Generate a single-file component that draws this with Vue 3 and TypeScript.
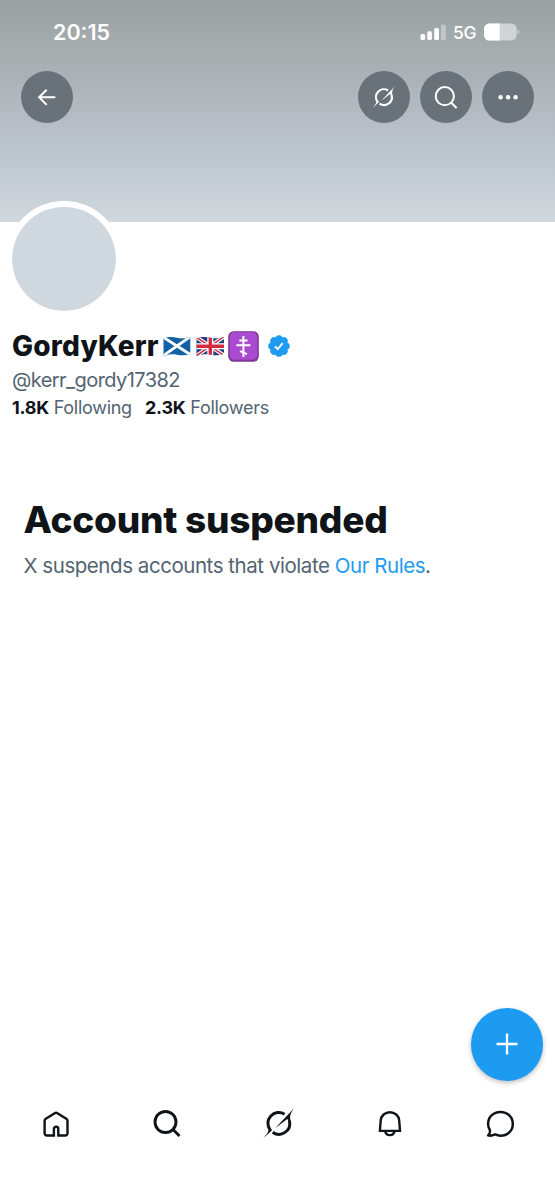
<script setup lang="ts">
const grokRing = 'M26 11.2A10.8 10.8 0 0 0 11.5 26.7M14.2 29.3A10.8 10.8 0 0 0 30.9 17.8'
const grokSlash =
  'M36 4.7L16.6 25.3L28.800 16Q30 17 29.500 18.500L32.300 18C30.900 13.500 31.500 10.500 36 4.700zM4.700 35.300L13.600 27.200L12.400 25.400L9.900 27.200C9.700 29.500 7.800 31.500 4.700 35.300z'
const badgeLobes: number[] = [0, 45, 90, 135, 180, 225, 270, 315]
</script>

<template>
  <div class="screen">
    <header class="banner">
      <div class="status">
        <span class="time">20:15</span>
        <div class="signals">
          <svg class="bars" width="26" height="17" viewBox="0 0 26 17" fill="#fff">
            <rect x="0.5" y="10" width="4.6" height="6" rx="1.6" />
            <rect x="7.3" y="7.3" width="4.6" height="8.7" rx="1.6" />
            <rect x="14.2" y="4" width="4.8" height="12" rx="1.6" />
            <rect x="21" y="0.5" width="4.8" height="15.5" rx="1.6" opacity="0.35" />
          </svg>
          <span class="network">5G</span>
          <svg class="battery" width="36" height="18" viewBox="0 0 36 18">
            <rect x="0" y="0.5" width="32.7" height="17" rx="5.4" fill="#fff" opacity="0.5" />
            <path d="M5.4.5H15.7v17H5.4A5.4 5.4 0 0 1 0 12.1V5.9A5.4 5.4 0 0 1 5.4.5z" fill="#fff" />
            <path d="M33.7 6.3c2 .9 2 4.5 0 5.4z" fill="#fff" opacity="0.5" />
          </svg>
        </div>
      </div>
      <div class="actions">
        <button class="round" aria-label="Back">
          <svg width="52" height="52" viewBox="0 0 52 52" fill="none" stroke="#fff" stroke-width="2">
            <path d="M34.3 26.3H18M25.7 18.7l-7.6 7.6 7.6 7.6" />
          </svg>
        </button>
        <div class="group">
          <button class="round" aria-label="Grok">
            <svg width="24" height="24" viewBox="3.9 3.7 33 33">
              <path :d="grokRing" fill="none" stroke="#fff" stroke-width="3" />
              <path :d="grokSlash" fill="#fff" />
            </svg>
          </button>
          <button class="round" aria-label="Search">
            <svg width="52" height="52" viewBox="0 0 52 52" fill="none" stroke="#fff" stroke-width="2">
              <circle cx="24.8" cy="25.2" r="9.1" />
              <path d="M31.3 31.7l5.3 5.3" />
            </svg>
          </button>
          <button class="round" aria-label="More">
            <svg width="52" height="52" viewBox="0 0 52 52" fill="#fff">
              <circle cx="18.6" cy="26.2" r="2.2" />
              <circle cx="26.1" cy="26.2" r="2.2" />
              <circle cx="33.6" cy="26.2" r="2.2" />
            </svg>
          </button>
        </div>
      </div>
    </header>

    <section class="profile">
      <div class="avatar"></div>
      <div class="name-row">
        <span class="name">GordyKerr</span>
        <svg class="scotland" width="28" height="21" viewBox="0 0 28 21">
          <defs>
            <clipPath id="scot"><path d="M.5 2.3C6.500.2 10 .8 14 1.7s8 .8 13.300-.7v16.7c-5 1.9-9.300 1.8-13.300 1S6 18 .5 20z" /></clipPath>
          </defs>
          <g clip-path="url(#scot)">
            <rect width="28" height="21" fill="#1261a8" />
            <path d="M0 1l28 18M0 20L28 0" stroke="#fff" stroke-width="2.8" />
          </g>
        </svg>
        <svg class="union" width="29" height="21" viewBox="0 0 29 21">
          <defs>
            <clipPath id="union"><path d="M.5 2.3C6.5.2 10.5.8 14.5 1.7s8 .8 13.500-.7v16.7c-5 1.9-9.5 1.8-13.500 1s-8-.7-14 1.300z" /></clipPath>
          </defs>
          <g clip-path="url(#union)">
            <rect width="29" height="21" fill="#253c7c" />
            <path d="M0 1l29 19M0 20L29 0" stroke="#fff" stroke-width="3.8" />
            <path d="M0 1l29 19M0 20L29 0" stroke="#d22b40" stroke-width="1.5" />
            <path d="M14.3 0v21M0 10.3h29" stroke="#fff" stroke-width="6" />
            <path d="M14.3 0v21M0 10.3h29" stroke="#d22b40" stroke-width="3.4" />
          </g>
        </svg>
        <svg class="cross" width="31" height="31" viewBox="0 0 31 31">
          <rect x="0.2" y="0.2" width="30.6" height="30.6" rx="5.5" fill="#7f3496" />
          <rect x="1.6" y="1.2" width="27.6" height="27.6" rx="4.7" fill="#a94bd0" />
          <path d="M15.4 5v21M11.3 9.6h8.2M8.4 14.3h14M12 20.1l7 3" stroke="#fff" stroke-width="2" fill="none" />
        </svg>
        <svg class="verified" width="22" height="22" viewBox="0 0 22 22">
          <g fill="#1d9bf0">
            <circle cx="11" cy="11" r="9" />
            <circle v-for="a in badgeLobes" :key="a" cx="11" cy="3.800" r="3.600" :transform="`rotate(${a} 11 11)`" />
          </g>
          <path d="M6.9 11.3l2.8 2.8 5-5.900" stroke="#fff" stroke-width="1.9" fill="none" />
        </svg>
      </div>
      <div class="handle">@kerr_gordy17382</div>
      <div class="stats">
        <span class="stat following"><b>1.8K</b> <span>Following</span></span>
        <span class="stat followers"><b>2.3K</b> <span>Followers</span></span>
      </div>
    </section>

    <main class="notice">
      <h1>Account suspended</h1>
      <p>X suspends accounts that violate <a>Our Rules</a>.</p>
    </main>

    <button class="compose" aria-label="New post">
      <svg width="22" height="22" viewBox="0 0 22 22" stroke="#fff" stroke-width="2.3"><path d="M11 .5v21M.5 11h21" /></svg>
    </button>

    <nav class="tabs">
      <svg viewBox="0 0 36 36" fill="none" stroke="#0f1419" stroke-width="2.4">
        <path d="M15.9 29.500H8.900a2.300 2.300 0 0 1-2.300-2.300V15c0-.9.4-1.700 1.200-2.200l8.900-5.600a2.500 2.500 0 0 1 2.700 0l8.900 5.600c.8.5 1.200 1.300 1.200 2.200v12.200a2.300 2.300 0 0 1-2.300 2.300h-6.900v-6.500a2.200 2.200 0 0 0-4.400 0z" />
      </svg>
      <svg viewBox="0 0 36 36" fill="none" stroke="#0f1419" stroke-width="2.9">
        <circle cx="16.500" cy="16" r="10.5" />
        <path d="M24 23.500l6.500 6.500" />
      </svg>
      <svg viewBox="1.5 3 36 36">
        <path :d="grokRing" fill="none" stroke="#0f1419" stroke-width="3" />
        <path :d="grokSlash" fill="#0f1419" />
      </svg>
      <svg viewBox="0 0 36 36" fill="none" stroke="#0f1419" stroke-width="2.4">
        <path d="M8.900 24.900l.8-10.400C10.100 9.600 14 6.200 18.900 6.200s8.900 3.400 9.300 8.300l.8 10.400z" />
        <path d="M14.100 25a4.800 4.800 0 0 0 9.500 0" />
      </svg>
      <svg viewBox="0 0 36 36" fill="none" stroke="#0f1419" stroke-width="2.5" stroke-linejoin="round">
        <path d="M18.4 5.9c-7.200 0-12.300 5.200-12.300 12 0 2.300.8 4.300 1.700 6.200.4 1 0 3.700-1.600 5.300 2.700.7 5-.1 7-1 1.700.9 3.400 1.300 5.200 1.300 7.200 0 12.400-5 12.400-11.800S25.600 5.900 18.400 5.900z" />
      </svg>
    </nav>
  </div>
</template>

<style>
body {
  margin: 0;
  background: #fff;
}
</style>

<style scoped>
.screen {
  position: relative;
  display: flex;
  flex-direction: column;
  width: 555px;
  height: 1200px;
  overflow: hidden;
  background: #fff;
  color: #0f1419;
  font-family: Inter, 'Liberation Sans', sans-serif;
}
svg {
  display: block;
  flex: none;
}
button {
  padding: 0;
  border: 0;
}
.banner {
  box-sizing: border-box;
  height: 222px;
  flex: none;
  padding: 18px 21px 0;
  background: linear-gradient(#99a1a2 0, #a5acad 48px, #acb3b8 80px, #b9c1c8 135px, #c5cdd4 180px, #cfd8dc 222px);
}
.status {
  display: flex;
  justify-content: space-between;
  height: 28px;
  align-items: center;
  padding: 0 14px 0 32px;
  color: #fff;
}
.time {
  font-size: 21.5px;
  font-weight: 600;
  letter-spacing: 0;
}
.signals {
  display: flex;
  align-items: center;
}
.network {
  width: 31px;
  padding-left: 7px;
  box-sizing: border-box;
  font-size: 17.5px;
  font-weight: 500;
  letter-spacing: -0.3px;
}
.battery {
  margin-left: 7px;
}
.actions {
  display: flex;
  justify-content: space-between;
  margin-top: 25px;
}
.group {
  display: flex;
  gap: 10.2px;
}
.round {
  display: flex;
  align-items: center;
  justify-content: center;
  width: 52px;
  height: 52px;
  border-radius: 50%;
  background: #697278;
}
.profile {
  height: 268px;
  padding-left: 12px;
}
.avatar {
  width: 104px;
  height: 104px;
  margin: -21.5px 0 0 -6.5px;
  border: 6px solid #fff;
  border-radius: 50%;
  background: #cfd8de;
  background-clip: padding-box;
}
.name-row {
  display: flex;
  align-items: center;
  height: 32px;
  margin-top: 13.5px;
}
.name {
  width: 150.5px;
  font-size: 28px;
  font-weight: 800;
  letter-spacing: 0.2px;
  white-space: nowrap;
}
.union {
  margin-left: 5px;
}
.cross {
  margin-left: 3.5px;
}
.verified {
  margin-left: 9px;
}
.handle {
  margin-top: 5px;
  font-size: 20px;
  line-height: 26px;
  color: #536471;
  letter-spacing: -0.57px;
}
.stats {
  display: flex;
  margin-top: 2px;
  font-size: 18px;
  line-height: 26px;
  color: #536471;
  white-space: nowrap;
  letter-spacing: -0.27px;
}
.stat b {
  color: #0f1419;
  font-weight: 700;
}
.following {
  width: 133px;
}
.notice {
  flex: 1;
  padding: 6px 23.5px 0;
}
h1 {
  margin: 0;
  font-size: 37px;
  line-height: 48px;
  font-weight: 800;
  letter-spacing: -0.24px;
  white-space: nowrap;
}
p {
  margin: 8px 0 0;
  font-size: 20.5px;
  line-height: 28px;
  color: #536471;
  white-space: nowrap;
  letter-spacing: -0.45px;
}
a {
  color: #1d9bf0;
}
.compose {
  position: absolute;
  right: 12px;
  bottom: 119.5px;
  display: flex;
  align-items: center;
  justify-content: center;
  width: 72.5px;
  height: 72.5px;
  border-radius: 50%;
  background: #1d9bf0;
  box-shadow: 0 2px 5px rgba(0, 0, 0, 0.25);
}
.tabs {
  display: grid;
  grid-template-columns: repeat(5, 111px);
  height: 94px;
  flex: none;
  justify-items: center;
}
.tabs svg {
  width: 36px;
  height: 36px;
}
</style>
